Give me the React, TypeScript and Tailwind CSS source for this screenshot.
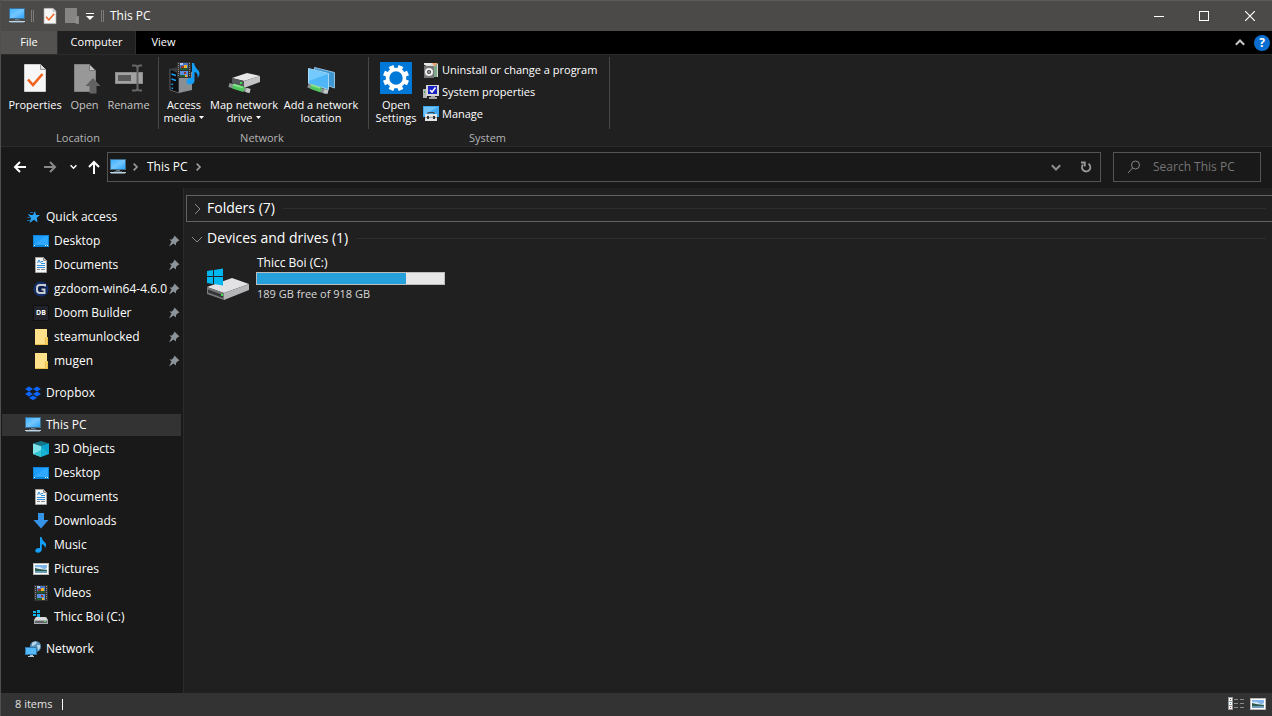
import React from 'react';

type IconProps = { className?: string };

const PcIcon: React.FC<IconProps> = ({ className = 'w-4 h-4' }) => (
  <svg viewBox="0 0 16 16" className={className} aria-hidden="true">
    <defs>
      <linearGradient id="pcScreen" x1="0" y1="0" x2="1" y2="1">
        <stop offset="0" stopColor="#3fb2ff" />
        <stop offset="0.5" stopColor="#74c6ff" />
        <stop offset="1" stopColor="#2ba3fb" />
      </linearGradient>
    </defs>
    <rect x="0" y="0" width="16" height="11" fill="#3d6f93" />
    <rect x="1" y="1" width="14" height="9" fill="url(#pcScreen)" />
    <rect x="6" y="11" width="4" height="1" fill="#6b7b88" />
    <rect x="4" y="12" width="8" height="1" fill="#53616c" />
    <rect x="0" y="13" width="16" height="1" fill="#c3d3de" />
    <rect x="1" y="14" width="14" height="1" fill="#6d7e8b" />
  </svg>
);

const CheckPageIcon: React.FC<IconProps> = ({ className = 'w-8 h-8' }) => (
  <svg viewBox="0 0 32 32" className={className} aria-hidden="true">
    <path d="M5.5 2.5H21.5L26.5 7.5V29.5H5.5z" fill="#f7f7f7" stroke="#cfcfcf" />
    <path d="M21.5 2.5V7.5H26.5" fill="#ddd" stroke="#9a9a9a" />
    <path d="M9 17.5L14 23L23.5 12" fill="none" stroke="#f2611d" strokeWidth="2.6" />
  </svg>
);

const OpenIcon: React.FC<IconProps> = ({ className = 'w-8 h-8' }) => (
  <svg viewBox="0 0 32 32" className={className} aria-hidden="true">
    <path d="M5.5 2.5H20.5L26.5 8.5V29.5H5.5z" fill="#989898" stroke="#828282" />
    <path d="M20.5 2.5V8.5H26.5z" fill="#c4c4c4" stroke="#767676" />
    <path d="M24 16L31.5 24H27.5V31.5H20.5V24H16.5z" fill="#626262" />
  </svg>
);

const RenameIcon: React.FC<IconProps> = ({ className = 'w-8 h-8' }) => (
  <svg viewBox="0 0 32 32" className={className} aria-hidden="true">
    <rect x="2.5" y="10.5" width="27" height="11" fill="#a2a2a2" stroke="#8a8a8a" />
    <rect x="5" y="13" width="13" height="6" fill="#5a5a5a" />
    <path
      d="M19 3.5H22Q24.5 3.5 24.5 6V26Q24.5 28.5 22 28.5H19M29 3.5H27Q24.5 3.5 24.5 6M24.5 26Q24.5 28.5 27 28.5H29"
      fill="none"
      stroke="#666"
      strokeWidth="2"
    />
  </svg>
);

const FilmArt: React.FC = () => (
  <g>
    <rect x="1" y="0" width="14" height="16" fill="#333" />
    <path
      d="M2 1h1v1H2zM2 3h1v1H2zM2 5h1v1H2zM2 7h1v1H2zM2 9h1v1H2zM2 11h1v1H2zM2 13h1v1H2zM13 1h1v1h-1zM13 3h1v1h-1zM13 5h1v1h-1zM13 7h1v1h-1zM13 9h1v1h-1zM13 11h1v1h-1zM13 13h1v1h-1z"
      fill="#8d8d8d"
    />
    <rect x="4" y="1" width="8" height="7" fill="#4a74c8" />
    <rect x="4" y="9" width="8" height="6" fill="#5b8fe0" />
    <path d="M4 6h8v2H4zM4 13h5v2H4z" fill="#235c33" />
    <path d="M8 3h3v3H8zM9 13h2v2H9z" fill="#f0b42c" />
    <path d="M5 4h3v2H5zM8 10h2v2H8z" fill="#a33422" />
    <path d="M4 1h3v2H4z" fill="#a9c6f2" />
  </g>
);

const MediaIcon: React.FC = () => (
  <svg viewBox="0 0 32 32" className="w-8 h-8" aria-hidden="true">
    <path d="M2 7L11 10V31L2 28z" fill="#0c0e10" stroke="#5a5f64" />
    <path d="M11 12L24 10V28L11 31z" fill="#8a8f94" />
    <path d="M2 7L10 5L24 10L11 12z" fill="#3c4043" />
    <path d="M3.5 12L8 13.5M3.5 17L8 18.5M3.5 22L5 22.5M3.5 26L5 26.5" stroke="#1c9cf2" strokeWidth="1.5" />
    <svg x="8" y="0" width="16" height="16" viewBox="0 0 16 16">
      <FilmArt />
    </svg>
    <path
      d="M24 1H26Q27 6 30.5 8.5Q33 12 29.5 16Q30.5 11 26.5 10V19Q26 22.5 21.5 22.5Q18 22 18.5 19Q19.5 15.5 24 15.5z"
      fill="#159cf5"
    />
  </svg>
);

const NetworkDriveIcon: React.FC = () => (
  <svg viewBox="0 0 32 32" className="w-8 h-8" aria-hidden="true">
    <path d="M4 16L19 11L32 14L16 19z" fill="#e6e6e7" />
    <path d="M4 16L16 19V25L4 21z" fill="#55585a" />
    <path d="M16 19L32 14V20L16 26z" fill="#c2c3c5" />
    <rect x="12" y="20" width="2" height="2" fill="#35e04b" />
    <path d="M1 23L22 29" stroke="#8b9292" strokeWidth="4" />
    <path d="M5 24L16 27.5" stroke="#4fc75c" strokeWidth="5" />
    <path d="M5 22.5L15 25.5" stroke="#8ce795" strokeWidth="1.5" />
    <path d="M18 28L22 29" stroke="#c4caca" strokeWidth="4" />
  </svg>
);

const NetworkPlaceIcon: React.FC = () => (
  <svg viewBox="0 0 32 32" className="w-8 h-8" aria-hidden="true">
    <path d="M9.5 5.5L29.5 10.5V26L24 24L9.5 20z" fill="#3f97d2" stroke="#8fc0de" />
    <path d="M3.5 6.5L23.5 11.5V27.5L3.5 21.5z" fill="#4fb7f8" stroke="#a8d7f0" />
    <path d="M4 7L23 12L4 19z" fill="#74cafc" />
    <path d="M3 23.5L21 30" stroke="#8b9292" strokeWidth="4" />
    <path d="M6 24.5L16 28" stroke="#4fc75c" strokeWidth="5" />
    <path d="M6 23L15 26" stroke="#8ce795" strokeWidth="1.5" />
    <path d="M19 29L23 30" stroke="#c4caca" strokeWidth="4" />
  </svg>
);

const SettingsIcon: React.FC = () => (
  <svg viewBox="0 0 32 32" className="w-8 h-8" aria-hidden="true">
    <rect width="32" height="32" fill="#0078d7" />
    <g fill="#fff">
      <path d="M13.5 3h5v5h-5zM13.5 24h5v5h-5zM3 13.5h5v5H3zM24 13.5h5v5h-5z" transform="rotate(22.5 16 16)" />
      <path d="M13.5 3h5v5h-5zM13.5 24h5v5h-5zM3 13.5h5v5H3zM24 13.5h5v5h-5z" transform="rotate(67.5 16 16)" />
    </g>
    <circle cx="16" cy="16" r="8.5" fill="none" stroke="#fff" strokeWidth="3.6" />
  </svg>
);

const UninstallIcon: React.FC = () => (
  <svg viewBox="0 0 16 16" className="w-4 h-4 shrink-0" aria-hidden="true">
    <path d="M1 1H14L15 2V15H9z" fill="#d7dcd3" />
    <path d="M9 1H14V8z" fill="#e8a070" />
    <path d="M11 5L14 2V15H11z" fill="#7fa98b" />
    <rect x="1" y="4" width="10" height="12" fill="#777" />
    <path d="M1 1H8V3H1z" fill="#e6e6e6" />
    <circle cx="6" cy="10" r="4" fill="#eee" />
    <circle cx="6" cy="10" r="2" fill="#3c3c3c" />
    <circle cx="6" cy="10" r="0.8" fill="#fff" />
  </svg>
);

const SystemIcon: React.FC = () => (
  <svg viewBox="0 0 16 16" className="w-4 h-4 shrink-0" aria-hidden="true">
    <rect x="0" y="5" width="4" height="9" fill="#b5b5b5" />
    <rect x="1" y="7" width="1" height="2" fill="#3fae48" />
    <rect x="3" y="1" width="13" height="11" fill="#d6d6d6" />
    <rect x="5" y="2" width="9" height="8" fill="#1a22c4" />
    <path d="M7 6L9 8L12.5 3.5" stroke="#fff" strokeWidth="1.5" fill="none" />
    <path d="M8 12H12V13H14V15H6V13H8z" fill="#a6a6a6" />
  </svg>
);

const ManageIcon: React.FC = () => (
  <svg viewBox="0 0 16 16" className="w-4 h-4 shrink-0" aria-hidden="true">
    <rect x="0" y="0" width="16" height="11" fill="#3fa9f2" />
    <path d="M1 1H15L1 9z" fill="#6fc4fb" />
    <path d="M5 8V6.5H11V8" stroke="#3d4348" fill="none" />
    <rect x="2" y="8" width="12" height="7" fill="#e2e4e6" />
    <rect x="2" y="11" width="12" height="1" fill="#9da1a5" />
    <path d="M4 10h2v3H4zM10 10h2v3h-2z" fill="#33383c" />
  </svg>
);

const StarIcon: React.FC = () => (
  <svg viewBox="0 0 16 16" className="w-4 h-4" aria-hidden="true">
    <path d="M10 2L11 6H15L11.8 8.8L12.5 13.5L9 10.8L4.5 14L6 9L3.5 6H8z" fill="#2ea5f5" />
    <path d="M5 3.5H8M3 5.5H5M2.5 8.5H5M2 11.5H5" stroke="#1a6ea8" />
  </svg>
);

const DesktopIcon: React.FC = () => (
  <svg viewBox="0 0 16 16" className="w-4 h-4" aria-hidden="true">
    <rect y="2" width="16" height="12" fill="#0b84dc" />
    <rect x="1" y="3" width="14" height="9" fill="#1e9cf9" />
    <path d="M1 12L12 3H15V12z" fill="#2fa8ff" />
    <path d="M1 12h1v1H1zM12 12h1v1h-1zM14 12h1v1h-1z" fill="#fff" />
  </svg>
);

const DocumentIcon: React.FC = () => (
  <svg viewBox="0 0 16 16" className="w-4 h-4" aria-hidden="true">
    <path d="M2.5 0.5H10.5L13.5 3.5V15.5H2.5z" fill="#f5f5f5" stroke="#a5a5a5" />
    <path d="M10.5 0.5V3.5H13.5z" fill="#cfcfcf" stroke="#8e8e8e" />
    <path d="M4.5 6L6 3L7.5 6M8 4.5H10M8 6.5H12M4 8.5H12M4 10.5H12" stroke="#2d8fdd" fill="none" />
    <path d="M4 12.5H7M8 12.5H12" stroke="#8b8b8b" />
  </svg>
);

const GzdoomIcon: React.FC = () => (
  <svg viewBox="0 0 16 16" className="w-4 h-4" aria-hidden="true">
    <circle cx="8" cy="8" r="7.5" fill="#13316f" />
    <circle cx="8" cy="8" r="5.5" fill="#0c1f4c" />
    <path d="M12 5.5V4H7Q4 4 4 7V9Q4 12 7 12H11.5V8.5H8.5" fill="none" stroke="#c9ccd1" strokeWidth="2" />
  </svg>
);

const DoomBuilderIcon: React.FC = () => (
  <span className="w-4 h-4 bg-[#23232b] border border-[#101013] text-white text-[7px] leading-[14px] font-bold text-center block">
    DB
  </span>
);

const FolderIcon: React.FC = () => (
  <svg viewBox="0 0 16 16" className="w-4 h-4" aria-hidden="true">
    <path d="M2 0H14V8H15V16H2z" fill="#e9bf4c" />
    <path d="M2 0H14V8L12 9V15H2z" fill="#ffe08a" />
    <path d="M13 9H14V15H13z" fill="#fbd56c" />
  </svg>
);

const DropboxIcon: React.FC = () => (
  <svg viewBox="0 0 16 16" className="w-4 h-4" aria-hidden="true">
    <path
      d="M4 1.5L8 4L4 6.5L0 4zM12 1.5L16 4L12 6.5L8 4zM4 6.5L8 9L4 11.5L0 9zM12 6.5L16 9L12 11.5L8 9zM8 10.5L12 12.7L8 15.2L4 12.7z"
      fill="#0d66ff"
    />
  </svg>
);

const CubeIcon: React.FC = () => (
  <svg viewBox="0 0 16 16" className="w-4 h-4" aria-hidden="true">
    <path d="M8 0L16 2.5L8 5L0 2.5z" fill="#14758a" />
    <path d="M0 2.5L8 5V16L0 13z" fill="#7fe3ea" />
    <path d="M0 13L8 9V16z" fill="#35c3d2" />
    <path d="M8 5L16 2.5V13L8 16z" fill="#18b2d4" />
    <path d="M8 5L16 2.5V13z" fill="#0aa1cc" />
  </svg>
);

const DownloadIcon: React.FC = () => (
  <svg viewBox="0 0 16 16" className="w-4 h-4" aria-hidden="true">
    <path d="M5 0H11V7H15.5L8 15.5L0.5 7H5z" fill="#3593e8" />
  </svg>
);

const MusicIcon: React.FC = () => (
  <svg viewBox="0 0 16 16" className="w-4 h-4" aria-hidden="true">
    <path
      d="M7 0H8.5Q9 3 11.5 5Q14.5 7.5 12 11Q12 8 8.8 7V12.5Q8.5 15.5 5 15.8Q2 15.5 2.3 13Q3 10.8 7 11z"
      fill="#12a0fb"
    />
  </svg>
);

const PictureIcon: React.FC<IconProps> = ({ className = 'w-4 h-4' }) => (
  <svg viewBox="0 0 16 16" className={className} aria-hidden="true">
    <rect x="0" y="2" width="16" height="12" fill="#b9b9b9" />
    <rect x="1" y="3" width="14" height="10" fill="#fff" />
    <rect x="2" y="4" width="12" height="8" fill="#7fb4ea" />
    <path d="M2 6Q6 5 9 7T14 6.5V10H2z" fill="#d5e8f7" />
    <path d="M2 7L6 8L14 9V10H2z" fill="#2c5a4c" />
    <rect x="2" y="10" width="12" height="2" fill="#6d9cb4" />
  </svg>
);

const VideoIcon: React.FC = () => (
  <svg viewBox="0 0 16 16" className="w-4 h-4" aria-hidden="true">
    <FilmArt />
  </svg>
);

const SmallDriveIcon: React.FC = () => (
  <svg viewBox="0 0 16 16" className="w-4 h-4" aria-hidden="true">
    <path d="M0 2h3v2H0zM4 1h3v3H4zM0 5h3v2H0zM4 5h3v3H4z" fill="#12b4f2" />
    <path d="M3 8H13L15 11H1z" fill="#d9dadb" />
    <rect x="1" y="11" width="14" height="4" fill="#a9acae" />
    <rect x="2" y="12" width="12" height="2" fill="#606365" />
    <rect x="11" y="12" width="2" height="1" fill="#4be35a" />
  </svg>
);

const NetworkIcon: React.FC = () => (
  <svg viewBox="0 0 16 16" className="w-4 h-4" aria-hidden="true">
    <circle cx="10.5" cy="5.5" r="5.5" fill="#5a93ba" />
    <path d="M7 2Q10 0 12 1L10 4L7 5zM12 4L15 4Q15.5 8 13 9z" fill="#b9d9ea" />
    <rect x="0" y="6" width="12" height="8" fill="#2f78ad" />
    <rect x="1" y="7" width="10" height="6" fill="#55b8fb" />
    <path d="M5 14H8V15H9V16H3V15H5z" fill="#b5c6d2" />
  </svg>
);

const DriveIcon: React.FC = () => (
  <svg viewBox="0 0 44 34" className="w-11 h-[34px]" aria-hidden="true">
    <path d="M1 20L26 11L43 17L18 26z" fill="#e2e2e4" />
    <path d="M1 20L18 26V33L1 27z" fill="#77797b" />
    <path d="M2 22.5L17 28V31L2 25.5z" fill="#343536" />
    <path d="M18 26L43 17V23L18 33z" fill="#b4b5b7" />
    <rect x="15" y="27" width="2" height="2" fill="#3ede4c" />
    <path d="M1 4L7 3V9H1zM8 3L17 1.5V9H8zM1 10H7V17L1 16zM8 10H17V18.5L8 17z" fill="#00b6f1" />
  </svg>
);

const PinIcon: React.FC = () => (
  <svg viewBox="0 0 12 12" className="w-3 h-3 shrink-0" aria-hidden="true">
    <path d="M6.5 0.5L11.5 5.5L10 6L8 8V10.5L5.5 8.5L1 11.5L3.5 6.5L1.5 4.5H4L6 2z" fill="#8d9499" />
  </svg>
);

const Chevron: React.FC<{ dir: 'up' | 'down' | 'right'; className: string; bold?: boolean }> = ({
  dir,
  className,
  bold,
}) => {
  const paths = { up: 'M1 8L6 3L11 8', down: 'M1 4L6 9L11 4', right: 'M4 1L9 6L4 11' };
  return (
    <svg viewBox="0 0 12 12" className={className} aria-hidden="true">
      <path d={paths[dir]} fill="none" stroke="currentColor" strokeWidth={bold ? 2.5 : 1} />
    </svg>
  );
};

const Caret: React.FC = () => (
  <svg viewBox="0 0 5 3" className="inline-block w-[5px] h-[3px] ml-1 mb-[3px]" aria-hidden="true">
    <path d="M0 0H5L2.5 3z" fill="#fff" />
  </svg>
);

interface RibbonButtonProps {
  icon: React.ReactNode;
  lines: string[];
  className: string;
  menu?: boolean;
  disabled?: boolean;
}

const RibbonButton: React.FC<RibbonButtonProps> = ({ icon, lines, className, menu, disabled }) => (
  <button disabled={disabled} className={`flex flex-col items-center shrink-0 ${className}`}>
    {icon}
    <span className={`mt-1 leading-[13px] whitespace-nowrap ${disabled ? 'text-[#c5c5c5]' : 'text-white'}`}>
      {lines.map((line, i) => (
        <span key={line} className="block">
          {line}
          {menu && i === lines.length - 1 && <Caret />}
        </span>
      ))}
    </span>
  </button>
);

const RibbonGroup: React.FC<{ label: string; className: string; children: React.ReactNode }> = ({
  label,
  className,
  children,
}) => (
  <section aria-label={label} className={`relative flex flex-col justify-between shrink-0 pt-[7px] ${className}`}>
    <div className="flex items-start">{children}</div>
    <div className="text-center leading-4 pr-1 text-[#b4b4b4]">{label}</div>
    <div className="absolute right-0 top-0.5 h-[72px] w-px bg-[#474747]" />
  </section>
);

const systemLinks = [
  { label: 'Uninstall or change a program', icon: <UninstallIcon /> },
  { label: 'System properties', icon: <SystemIcon /> },
  { label: 'Manage', icon: <ManageIcon /> },
];

interface TreeItem {
  label: string;
  icon: React.ReactNode;
  pinned?: boolean;
}

interface TreeGroup extends TreeItem {
  active?: boolean;
  items?: TreeItem[];
}

const tree: TreeGroup[] = [
  {
    label: 'Quick access',
    icon: <StarIcon />,
    items: [
      { label: 'Desktop', icon: <DesktopIcon />, pinned: true },
      { label: 'Documents', icon: <DocumentIcon />, pinned: true },
      { label: 'gzdoom-win64-4.6.0', icon: <GzdoomIcon />, pinned: true },
      { label: 'Doom Builder', icon: <DoomBuilderIcon />, pinned: true },
      { label: 'steamunlocked', icon: <FolderIcon />, pinned: true },
      { label: 'mugen', icon: <FolderIcon />, pinned: true },
    ],
  },
  { label: 'Dropbox', icon: <DropboxIcon /> },
  {
    label: 'This PC',
    icon: <PcIcon />,
    active: true,
    items: [
      { label: '3D Objects', icon: <CubeIcon /> },
      { label: 'Desktop', icon: <DesktopIcon /> },
      { label: 'Documents', icon: <DocumentIcon /> },
      { label: 'Downloads', icon: <DownloadIcon /> },
      { label: 'Music', icon: <MusicIcon /> },
      { label: 'Pictures', icon: <PictureIcon /> },
      { label: 'Videos', icon: <VideoIcon /> },
      { label: 'Thicc Boi (C:)', icon: <SmallDriveIcon /> },
    ],
  },
  { label: 'Network', icon: <NetworkIcon /> },
];

const TreeRow: React.FC<TreeItem & { nested?: boolean; active?: boolean }> = ({
  label,
  icon,
  pinned,
  nested,
  active,
}) => (
  <a
    href="#"
    aria-current={active ? 'page' : undefined}
    className={`flex items-center h-[22px] ml-px mr-0.5 pr-px ${nested ? 'pl-[31px]' : 'pl-[23px]'} ${
      active ? 'bg-[#333333]' : ''
    }`}
  >
    <span className="w-4 shrink-0 mr-[5px]">{icon}</span>
    <span className="flex-1 whitespace-nowrap">{label}</span>
    {pinned && <PinIcon />}
  </a>
);

const DoubleBar: React.FC = () => <span className="w-[3px] h-3 border-x border-[#7d7c7a]" />;

const GroupHeader: React.FC<{ label: string; open?: boolean }> = ({ label, open }) => (
  <button
    aria-expanded={!!open}
    className={`flex items-center w-full h-[27px] pl-1 pr-1.5 text-sm border border-r-0 ${
      open ? 'border-transparent' : 'border-[#626262]'
    }`}
  >
    <Chevron dir={open ? 'down' : 'right'} className="w-3 h-3 mr-1 text-[#8a8a8a]" />
    <span className="whitespace-nowrap pb-0.5">{label}</span>
    <span className="flex-1 h-px ml-2 bg-[#2d2d2d]" />
  </button>
);

const used = 149 / 187;

export default function App() {
  return (
    <div className="flex flex-col min-h-screen bg-[#191919] text-white text-[12px] font-['Open_Sans','Noto_Sans',sans-serif] border-l border-[#4f4f4d]">
      <header className="flex items-center justify-between h-[31px] bg-[#4b4a48] border-t border-[#5c5b59]">
        <div className="flex items-center pl-2">
          <PcIcon />
          <span className="ml-1.5 flex">
            <DoubleBar />
          </span>
          <button aria-label="Properties" className="ml-[7px]">
            <CheckPageIcon className="w-[18px] h-[18px]" />
          </button>
          <button aria-label="New folder" disabled className="ml-1.5">
            <svg viewBox="0 0 14 16" className="w-[14px] h-4" aria-hidden="true">
              <path d="M0 0H12V8H14V16H11V15H0z" fill="#868583" />
              <path d="M12 9V14H10" stroke="#9b9a98" fill="none" />
            </svg>
          </button>
          <button aria-label="Customize toolbar" className="ml-[7px]">
            <svg viewBox="0 0 8 8" className="w-2 h-2" aria-hidden="true">
              <path d="M0 1H8V2H0zM0 4H8L4 8z" fill="#fff" />
            </svg>
          </button>
          <span className="ml-[7px] mr-1.5 flex">
            <DoubleBar />
          </span>
          <h1>This PC</h1>
        </div>
        <div className="flex h-full">
          <button aria-label="Minimize" className="w-[45px] flex items-center justify-center pb-px">
            <svg viewBox="0 0 10 10" className="w-2.5 h-2.5">
              <path d="M0 5.5H10" stroke="#fff" />
            </svg>
          </button>
          <button aria-label="Maximize" className="w-[46px] flex items-center justify-center pb-px">
            <svg viewBox="0 0 10 10" className="w-2.5 h-2.5">
              <rect x="0.5" y="0.5" width="9" height="9" fill="none" stroke="#fff" />
            </svg>
          </button>
          <button aria-label="Close" className="w-[45px] flex items-center justify-center pb-px">
            <svg viewBox="0 0 10 10" className="w-2.5 h-2.5">
              <path d="M0 0L10 10M10 0L0 10" stroke="#fff" strokeWidth="1.2" />
            </svg>
          </button>
        </div>
      </header>

      <nav className="flex items-stretch h-[23px] bg-black text-[11px]" aria-label="Ribbon tabs">
        <button className="w-14 bg-[#535250]">File</button>
        <button className="w-[79px] bg-[#202020] border-x border-[#2d2d2d]">Computer</button>
        <button className="w-[55px]">View</button>
        <div className="flex-1" />
        <button aria-label="Minimize the Ribbon" className="mr-[9px] text-[#c4c4c4]">
          <Chevron dir="up" className="w-2.5 h-2.5" bold />
        </button>
        <button aria-label="Help" className="mr-0.5 self-center">
          <span className="block w-4 h-4 rounded-full bg-[#0a6fd0] text-[12px] leading-4 font-bold">?</span>
        </button>
      </nav>

      <div className="flex h-[93px] bg-[#202020] border-y border-[#2b2b2b] text-[11px]">
        <RibbonGroup label="Location" className="w-[158px]">
          <RibbonButton icon={<CheckPageIcon />} lines={['Properties']} className="w-[68px]" />
          <RibbonButton icon={<OpenIcon />} lines={['Open']} className="w-[31px]" disabled />
          <RibbonButton icon={<RenameIcon />} lines={['Rename']} className="w-[57px]" disabled />
        </RibbonGroup>
        <RibbonGroup label="Network" className="w-[210px]">
          <RibbonButton icon={<MediaIcon />} lines={['Access', 'media']} className="w-[50px]" menu />
          <RibbonButton icon={<NetworkDriveIcon />} lines={['Map network', 'drive']} className="w-[70px]" menu />
          <RibbonButton icon={<NetworkPlaceIcon />} lines={['Add a network', 'location']} className="w-[84px]" />
        </RibbonGroup>
        <RibbonGroup label="System" className="w-[241px]">
          <RibbonButton icon={<SettingsIcon />} lines={['Open', 'Settings']} className="w-[54px]" />
          <ul className="-mt-[3px]">
            {systemLinks.map((link) => (
              <li key={link.label}>
                <button className="flex items-center gap-[3px] h-[22px] whitespace-nowrap">
                  {link.icon}
                  {link.label}
                </button>
              </li>
            ))}
          </ul>
        </RibbonGroup>
      </div>

      <div className="flex items-center h-[41px] pr-[11px] pb-0.5">
        <div className="flex items-center w-[106px] pl-3 shrink-0">
          <button aria-label="Back">
            <svg viewBox="0 0 14 14" className="w-[14px] h-[14px]" fill="none" stroke="#fff" strokeWidth="2">
              <path d="M13 7H2M7 2L2 7L7 12" />
            </svg>
          </button>
          <button aria-label="Forward" className="ml-4">
            <svg viewBox="0 0 14 14" className="w-[14px] h-[14px]" fill="none" stroke="#8a8a8a" strokeWidth="2">
              <path d="M1 7H12M7 2L12 7L7 12" />
            </svg>
          </button>
          <button aria-label="Recent locations" className="ml-[13px]">
            <Chevron dir="down" className="w-[7px] h-[7px]" bold />
          </button>
          <button aria-label="Up" className="ml-2.5">
            <svg viewBox="0 0 14 14" className="w-[14px] h-[14px]" fill="none" stroke="#fff" strokeWidth="2">
              <path d="M7 14V2M2 7L7 2L12 7" />
            </svg>
          </button>
        </div>
        <div className="flex flex-1 items-center h-[30px] border border-[#545454] pl-0.5">
          <PcIcon />
          <Chevron dir="right" className="w-2 h-2 ml-[5px] text-[#9a9a9a]" bold />
          <button className="ml-2">This PC</button>
          <Chevron dir="right" className="w-2 h-2 ml-1.5 text-[#9a9a9a]" bold />
          <div className="flex-1" />
          <button aria-label="Previous locations" className="w-[30px] flex justify-center text-[#8d8d8d]">
            <Chevron dir="down" className="w-2.5 h-2.5" bold />
          </button>
          <button aria-label="Refresh" className="w-[29px] flex justify-center">
            <svg viewBox="0 0 12 12" className="w-3 h-3" fill="none" stroke="#9a9a9a" strokeWidth="1.8">
              <path d="M8.5 2.8A4.2 4.2 0 1 1 3 3.5M1 1.5H4.8V5.5" />
            </svg>
          </button>
        </div>
        <label className="flex items-center w-[148px] h-[30px] ml-3 pl-[13px] border border-[#545454] shrink-0">
          <svg viewBox="0 0 14 14" className="w-[14px] h-[14px] mr-3 shrink-0" fill="none" stroke="#858585">
            <circle cx="8.5" cy="5" r="4" />
            <path d="M5.5 8L1 13" />
          </svg>
          <input
            type="search"
            aria-label="Search This PC"
            placeholder="Search This PC"
            className="w-full min-w-0 bg-transparent outline-none placeholder:text-[#757575]"
          />
        </label>
      </div>

      <div className="flex flex-1">
        <nav aria-label="Folders" className="flex flex-col gap-2.5 w-[183px] shrink-0 pt-[18px] border-r border-[#2b2b2b]">
          {tree.map((group) => (
            <div key={group.label} className="flex flex-col gap-0.5">
              <TreeRow label={group.label} icon={group.icon} active={group.active} />
              {group.items?.map((item) => (
                <TreeRow key={item.label} {...item} nested />
              ))}
            </div>
          ))}
        </nav>
        <main className="flex-1 bg-[#202020] pl-0.5 pt-[7px]">
          <GroupHeader label="Folders (7)" />
          <div className="mt-[3px]">
            <GroupHeader label="Devices and drives (1)" open />
          </div>
          <div className="flex pl-5 pt-[3px]">
            <div className="pt-3">
              <DriveIcon />
            </div>
            <div className="ml-1.5 w-[189px]">
              <div className="leading-4 pl-px">Thicc Boi (C:)</div>
              <div
                role="progressbar"
                aria-label="Used space"
                aria-valuenow={Math.round(used * 100)}
                className="h-[13px] my-px bg-[#e6e6e6] border border-[#bcbcbc]"
              >
                <div className="h-full bg-[#26a0da]" style={{ width: `${used * 100}%` }} />
              </div>
              <div className="leading-4 pl-px text-[11px] text-[#d8d8d8]">189 GB free of 918 GB</div>
            </div>
          </div>
        </main>
      </div>

      <footer className="flex items-center h-[23px] bg-[#333333] pl-3.5 pr-1.5 text-[11px] text-[#e2e2e2]">
        <span>8 items</span>
        <span className="w-px h-[11px] ml-2.5 bg-white" />
        <div className="flex-1" />
        <button aria-label="Details view" className="pb-0.5">
          <svg viewBox="0 0 16 13" className="w-4 h-[13px]">
            <path d="M0 0H5V13H0z" fill="#9a9a9a" />
            <path d="M1 1H4V4H1zM1 5H4V8H1zM1 9H4V12H1z" fill="#fff" />
            <path d="M2 2H3V3H2z" fill="#444" />
            <path d="M2 6H3V7H2z" fill="#2a7fd8" />
            <path d="M2 10H3V11H2z" fill="#d82a2a" />
            <path d="M6 2H10V3H6zM12 2H16V3H12zM6 6H10V7H6zM12 6H16V7H12zM6 10H10V11H6zM12 10H16V11H12z" fill="#8a8a8a" />
          </svg>
        </button>
        <button aria-label="Large icons view" className="ml-1.5 pb-0.5">
          <PictureIcon />
        </button>
      </footer>
    </div>
  );
}
